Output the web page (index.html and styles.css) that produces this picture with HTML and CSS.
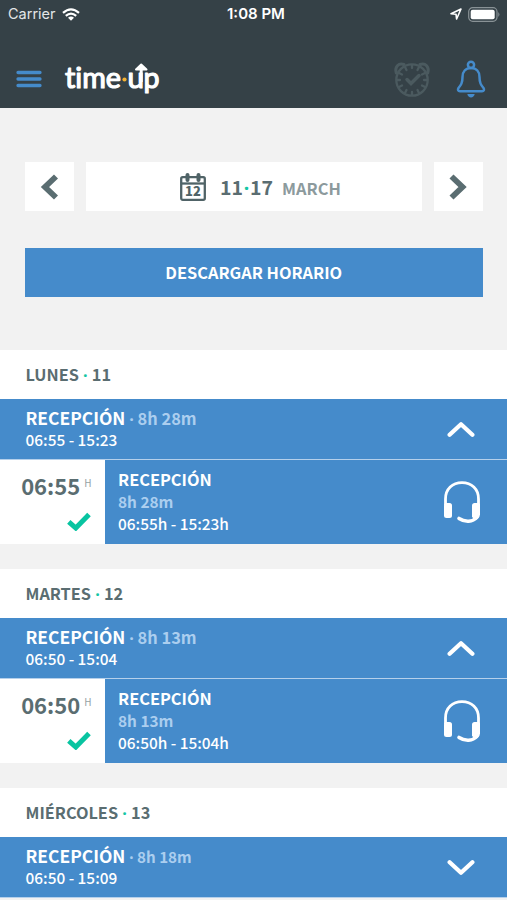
FILE: index.html
```html
<!DOCTYPE html>
<html lang="es">
<head>
<meta charset="utf-8">
<title>time·up</title>
<link rel="stylesheet" href="styles.css">
</head>
<body>
<svg width="0" height="0" class="defs">
  <symbol id="headset" viewBox="0 0 40 44">
    <path d="M3.500 25V19C3.500 9 10.500 2.700 20 2.700S36.500 9 36.500 19V35" fill="none" stroke="#fff" stroke-width="2.800"/>
    <rect x="2" y="23" width="8" height="15" rx="2.500" fill="#fff"/>
    <path d="M32.500 23H36C37.500 23 38 24 38 25V34C38 37 36 39.500 33.500 40L30 37V25.500C30 24 31 23 32.500 23Z" fill="#fff"/>
    <path d="M34.500 37.500C31 42 23 42.500 17 38.500" fill="none" stroke="#fff" stroke-width="3.600" stroke-linecap="round"/>
  </symbol>
  <symbol id="check" viewBox="0 0 24 19">
    <path d="M1.800 9.800L8.800 16L22 2.500" fill="none" stroke="#08c4a1" stroke-width="5"/>
  </symbol>
  <symbol id="up" viewBox="0 0 26 16">
    <path d="M2.300 13L13 3L23.700 13" fill="none" stroke="#fff" stroke-width="4" stroke-linecap="round" stroke-linejoin="round"/>
  </symbol>
</svg>
<header class="top">
  <div class="status">
    <span class="carrier">Carrier</span>
    <svg class="wifi" width="18" height="13" viewBox="0 0 18 13"><g fill="none" stroke="#fff" stroke-width="2.200"><path d="M1 4.800Q9-2.200 17 4.800"/><path d="M3.800 7.900Q9 3.300 14.200 7.900"/></g><path d="M6 9.800Q9 7.400 12 9.800L9 12.800Z" fill="#fff"/></svg>
    <span class="clock">1:08 PM</span>
    <svg class="loc" width="12" height="12" viewBox="0 0 12 12"><path d="M1 5.800L11 1L6.600 11L6 6.200Z" fill="none" stroke="#fff" stroke-width="1.600" stroke-linejoin="round"/></svg>
    <svg class="battery" width="32" height="15" viewBox="0 0 32 15"><rect x=".7" y=".7" width="28.300" height="13.600" rx="4" fill="none" stroke="#899296" stroke-width="1.200"/><rect x="2.700" y="2.700" width="24" height="9.600" rx="2" fill="#fff"/><path d="M30.300 5Q32.500 7.500 30.300 10Z" fill="#899296"/></svg>
  </div>
  <div class="bar">
    <svg class="menu" width="26" height="18" viewBox="0 0 26 18"><path d="M2 2.500H24M2 9H24M2 15.500H24" stroke="#458bcb" stroke-width="3.300" stroke-linecap="round"/></svg>
    <svg class="logo" width="98" height="36" viewBox="0 0 98 36">
      <g class="word"><text x="2" y="27.500" textLength="56" lengthAdjust="spacingAndGlyphs">time</text><text x="64.500" y="27.500" textLength="16.500" lengthAdjust="spacingAndGlyphs">u</text><text x="80.500" y="27.500" textLength="16" lengthAdjust="spacingAndGlyphs">p</text></g>
      <circle cx="61.500" cy="19.500" r="2.100" fill="#f2b134"/>
      <path d="M78.200 22V9" stroke="#fff" stroke-width="3"/><path d="M73 9.500L78.200 4.500L83.500 9.500Z" fill="#fff" stroke="#fff" stroke-width="2" stroke-linejoin="round"/>
    </svg>
    <svg class="alarm" width="38" height="38" viewBox="0 0 38 38"><g fill="none" stroke="#4b5a5f" stroke-width="2.300" stroke-linecap="round"><circle cx="19" cy="20" r="15.700"/><path d="M3.300 13C1.500 7 5.500 2.500 11 4.500M34.700 13C36.500 7 32.500 2.500 27 4.500" stroke-width="3"/><path d="M19 5V8M19 32V35M4 20H7M31 20H34M12 7L13.500 10M26 7L24.500 10M6 13L9 14.500M32 13L29 14.500M6 27L9 25.500M32 27L29 25.500M12 33L13.500 30M26 33L24.500 30"/><path d="M14 19.500L18 23.500L26 15.500" stroke-width="3.500"/></g></svg>
    <svg class="bell" width="30" height="38" viewBox="0 0 30 38"><g fill="none" stroke="#458bcb" stroke-width="2.500" stroke-linejoin="round"><circle cx="15" cy="4.800" r="3.100"/><path d="M15 8C9.500 8 6.500 12 6.500 17C6.500 23 5 25 2.500 28C1.500 29.500 2 31.200 4 31.200H26C28 31.200 28.500 29.500 27.500 28C25 25 23.500 23 23.500 17C23.500 12 20.500 8 15 8Z"/></g><path d="M11.300 34H18.700C18 38.500 12 38.500 11.300 34Z" fill="#458bcb"/></svg>
  </div>
</header>
<main>
  <div class="week">
    <button class="step"><svg width="20" height="28" viewBox="0 0 20 28"><path d="M16 3.500L5 14L16 24.500" fill="none" stroke="#5a6d71" stroke-width="5.800"/></svg></button>
    <div class="range">
      <svg class="cal" width="28" height="30" viewBox="0 0 28 30"><g fill="none" stroke="#506367" stroke-width="2.300"><rect x="2.200" y="5.200" width="23.600" height="22.600" rx="1.500"/><path d="M2 11.500H26"/></g><path d="M8.500 3V8M19.500 3V8" stroke="#506367" stroke-width="4" stroke-linecap="round"/><text x="14" y="24" class="calnum">12</text></svg>
      <span class="dates">11<i>·</i>17</span><span class="month">MARCH</span>
    </div>
    <button class="step"><svg width="20" height="28" viewBox="0 0 20 28"><path d="M3.500 3.500L14.500 14L3.500 24.500" fill="none" stroke="#5a6d71" stroke-width="5.800"/></svg></button>
  </div>
  <button class="download">DESCARGAR HORARIO</button>

  <section class="day">
    <h2>LUNES <i>·</i> 11</h2>
    <div class="summary">
      <div><p class="role">RECEPCIÓN <span><i>·</i> 8h 28m</span></p><p class="hours">06:55 - 15:23</p></div>
      <svg class="chev" width="28" height="17"><use href="#up"/></svg>
    </div>
    <div class="shift">
      <div class="start"><p class="time">06:55<sup>H</sup></p><svg width="24" height="19"><use href="#check"/></svg></div>
      <div class="detail">
        <div><p class="name">RECEPCIÓN</p><p class="length">8h 28m</p><p class="span">06:55h - 15:23h</p></div>
        <svg width="40" height="44"><use href="#headset"/></svg>
      </div>
    </div>
  </section>
  <section class="day">
    <h2>MARTES <i>·</i> 12</h2>
    <div class="summary">
      <div><p class="role">RECEPCIÓN <span><i>·</i> 8h 13m</span></p><p class="hours">06:50 - 15:04</p></div>
      <svg class="chev" width="28" height="17"><use href="#up"/></svg>
    </div>
    <div class="shift">
      <div class="start"><p class="time">06:50<sup>H</sup></p><svg width="24" height="19"><use href="#check"/></svg></div>
      <div class="detail">
        <div><p class="name">RECEPCIÓN</p><p class="length">8h 13m</p><p class="span">06:50h - 15:04h</p></div>
        <svg width="40" height="44"><use href="#headset"/></svg>
      </div>
    </div>
  </section>
  <section class="day closed">
    <h2>MIÉRCOLES <i>·</i> 13</h2>
    <div class="summary">
      <div><p class="role">RECEPCIÓN <span><i>·</i> 8h 18m</span></p><p class="hours">06:50 - 15:09</p></div>
      <svg class="chev down" width="28" height="17"><use href="#up"/></svg>
    </div>
  </section>
</main>
</body>
</html>
```
FILE: styles.css
```css
* { box-sizing: border-box; margin: 0; padding: 0; }
body { width: 507px; height: 900px; overflow: hidden; background: #f2f2f2; font-family: "Noto Sans CJK SC", "Noto Sans", sans-serif; font-weight: 700; color: #5a6d71; }
svg { display: block; flex: none; }
.defs { position: absolute; }
i { font-style: normal; font-family: "Noto Sans", sans-serif; line-height: 1; color: #14c6a4; margin: 0 .5px; }
button { border: 0; font: inherit; }

.top { height: 108px; background: #354147; }
.status { height: 28px; display: flex; align-items: center; padding: 0 7px 0 8px; color: #fff; font: 400 14.5px/28px Inter, sans-serif; }
.carrier { width: 47px; color: #e3e6e7; }
.wifi { margin-left: 7px; }
.clock { margin-left: 147px; width: 60px; font-weight: 600; white-space: nowrap; font-size: 15px; }
.loc { margin-left: auto; margin-right: 6px; }
.bar { height: 80px; display: flex; align-items: center; padding: 21px 21px 0 16px; }
.logo { margin-left: 21px; margin-top: -1px; }
.word text { font: 400 29px Lato, sans-serif; font-variant-ligatures: none; fill: #fff; stroke: #fff; stroke-width: 1.2px; stroke-linejoin: round; }
.alarm { margin-left: auto; }
.bell { margin-left: 25px; }

.week { display: flex; gap: 12px; padding: 54px 24.500px 0 25px; height: 103px; }
.step { width: 49px; background: #fff; display: flex; align-items: center; justify-content: center; }
.range { flex: 1; background: #fff; display: flex; align-items: center; padding-left: 92.500px; }
.calnum { font: 900 13px "Noto Sans CJK SC", sans-serif; fill: #506367; text-anchor: middle; }
.dates { margin-left: 13.500px; width: 62px; font-size: 19.500px; line-height: 30px; white-space: nowrap; }
.dates i { margin: 0 .7px; }
.month { color: #8c9a9d; font-size: 16.400px; line-height: 30px; padding-top: 2px; }
.download { display: block; margin: 37px 24.500px 53.500px 25px; width: 457.500px; height: 48.500px; background: #458bcb; color: #fff; font-size: 16.350px; }

.day { margin-bottom: 25.500px; }
.day h2 { height: 49px; padding-left: 25.500px; background: #fff; font-size: 16.300px; line-height: 49px; white-space: pre; }
.summary { height: 60px; background: #458bcb; color: #fff; display: flex; justify-content: space-between; padding: 7.500px 32px 0 25.500px; }
.role { font-size: 17.400px; line-height: 22px; }
.role span { color: #abceef; font-size: 16.400px; }
.role i { color: inherit; margin: 0; }
.hours { font-size: 15.400px; line-height: 22px; font-weight: 500; margin-top: -1px; }
.chev { margin-top: 14px; }
.down { transform: scaleY(-1); }
.closed { margin-bottom: 0; border-bottom: 1.500px solid #b5d0eb; }
.closed .role span { font-size: 15.200px; }
.shift { height: 84.500px; display: flex; border-top: 1.500px solid #b5d0eb; }
.start { width: 105px; background: #fff; display: flex; flex-direction: column; align-items: flex-end; padding: 10px 13.500px 0 0; }
.time { font-size: 22px; line-height: 30px; white-space: nowrap; display: flex; }
.time sup { font-size: 10px; line-height: 25px; font-weight: 400; margin-left: 4px; color: #96a2a4; }
.start svg { margin: 11.500px 1px 0 0; }
.detail { flex: 1; background: #458bcb; color: #fff; display: flex; justify-content: space-between; padding: 8px 25px 0 13px; }
.detail svg { margin-top: 12px; }
.name { font-size: 16.350px; line-height: 22px; }
.length { font-size: 15.400px; line-height: 22.500px; color: #abceef; }
.span { font-size: 15.400px; line-height: 21px; font-weight: 500; }
```
